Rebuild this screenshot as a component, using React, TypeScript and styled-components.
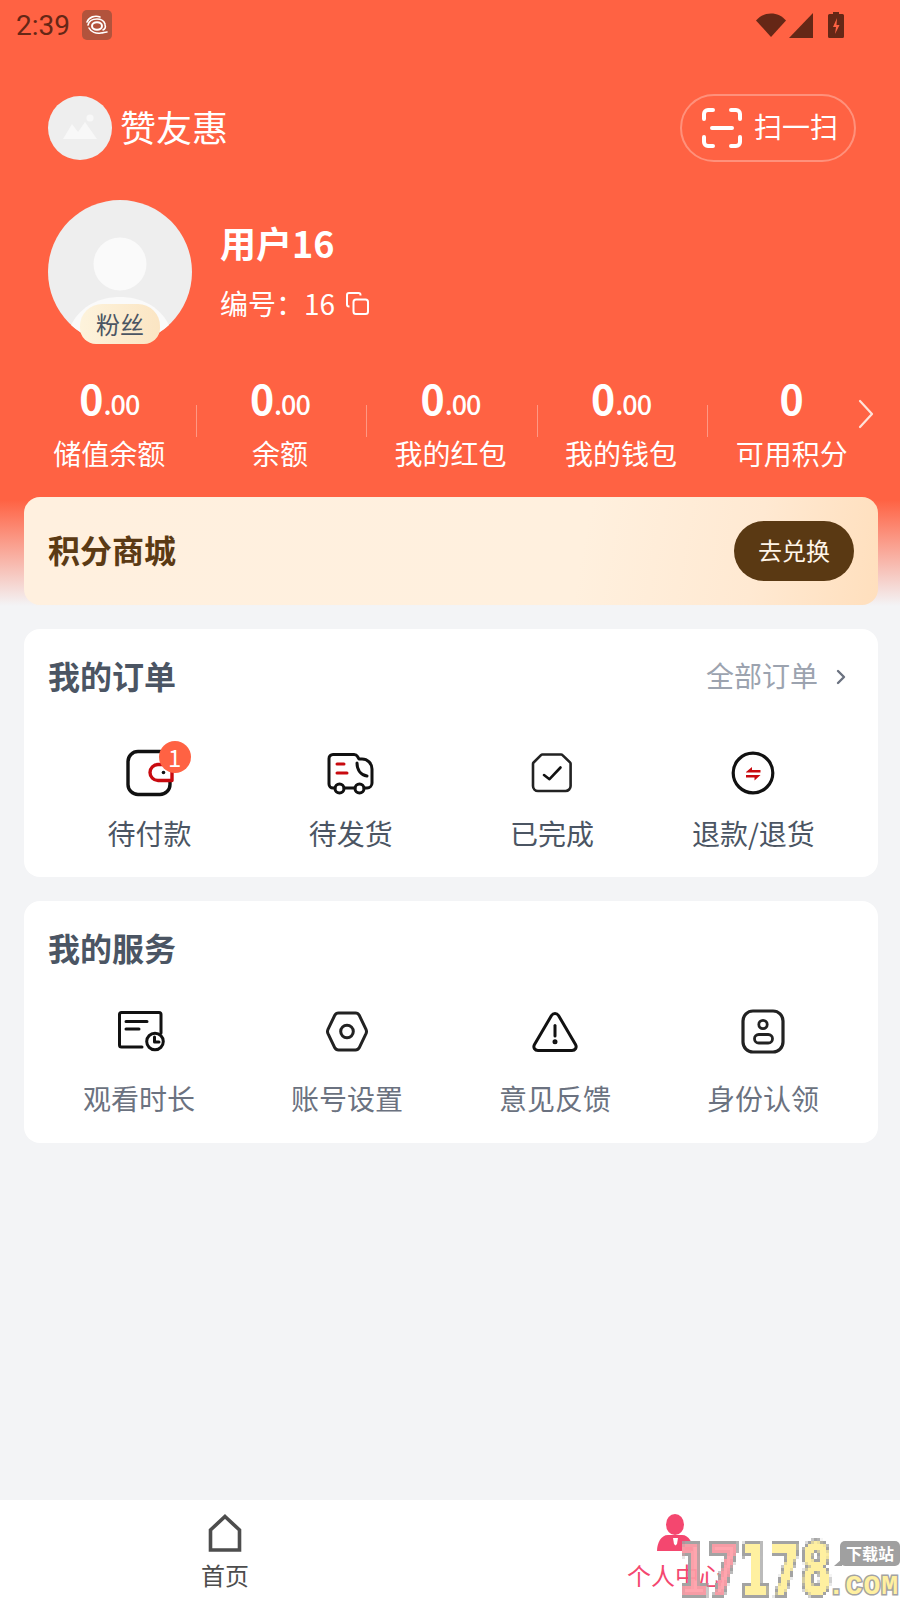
import styled, { createGlobalStyle } from 'styled-components';

const CJK = `"Noto Sans CJK SC", "Noto Sans", sans-serif`;

const GlobalStyle = createGlobalStyle`
  html, body {
    margin: 0;
    padding: 0;
    background: #f3f4f6;
    font-family: ${CJK};
  }
  * {
    box-sizing: border-box;
  }
`;

const stats = [
  { label: '储值余额', decimals: true },
  { label: '余额', decimals: true },
  { label: '我的红包', decimals: true },
  { label: '我的钱包', decimals: true },
  { label: '可用积分', decimals: false },
];

const WalletIcon = () => (
  <svg width="48" height="48" viewBox="0 0 48 48" fill="none">
    <rect x="2" y="2.500" width="42" height="43" rx="10" stroke="#111" strokeWidth="3.400" />
    <path d="M46 15.500H32a8 8 0 0 0 0 16h14z" fill="#fff" stroke="#c80a0f" strokeWidth="3.400" strokeLinejoin="round" />
    <circle cx="37.500" cy="23.500" r="1.800" fill="#111" />
  </svg>
);

const TruckIcon = () => (
  <svg width="48" height="48" viewBox="0 0 48 48" fill="none" stroke="#111" strokeWidth="3" strokeLinecap="round" strokeLinejoin="round">
    <path d="M8 39H6a4 4 0 0 1-4-4V9.500a4 4 0 0 1 4-4h21a4 4 0 0 1 3.500 2l1.500 2.500h3a10 10 0 0 1 10 10V34a5 5 0 0 1-5 5h-3" />
    <path d="M17 39h11" />
    <circle cx="12.500" cy="39.500" r="4.500" />
    <circle cx="32.500" cy="39.500" r="4.500" />
    <path d="M30 14c0 7 4 12 10 13" />
    <path d="M10 15h7M10 24h10" stroke="#c80a0f" />
  </svg>
);

const DoneIcon = () => (
  <svg width="48" height="48" viewBox="0 0 48 48" fill="none" stroke="#222" strokeWidth="2.600" strokeLinejoin="round" strokeLinecap="round">
    <path d="M14.500 5.500H33a2 2 0 0 1 1.500.6l7.500 7.300a2 2 0 0 1 .6 1.500V37a5 5 0 0 1-5 5H10a5 5 0 0 1-5-5V15a2 2 0 0 1 .6-1.500l7.400-7.400a2 2 0 0 1 1.500-.6z" />
    <path d="M16 26l5.500 4.200L32.500 18.500" stroke="#111" />
  </svg>
);

const RefundIcon = () => (
  <svg width="48" height="48" viewBox="0 0 48 48" fill="none">
    <circle cx="24" cy="24" r="19.800" stroke="#111" strokeWidth="3.200" />
    <path d="M17 23l6-5v3h8.500v2.500H17zM31.500 26l-6 5.500v-3H17V26z" fill="#c80a0f" />
  </svg>
);

const WatchIcon = () => (
  <svg width="48" height="48" viewBox="0 0 48 48" fill="none" stroke="#111" strokeWidth="3" strokeLinecap="round" strokeLinejoin="round" overflow="visible">
    <path d="M46 26V7.500a2 2 0 0 0-2-2H6.500a2 2 0 0 0-2 2V38a2 2 0 0 0 2 2H27" />
    <path d="M11 14.500h21M11 22h13" />
    <circle cx="40" cy="34.500" r="8.300" />
    <path d="M39.500 30v5h4.500" />
  </svg>
);

const SettingIcon = () => (
  <svg width="48" height="48" viewBox="0 0 48 48" fill="none" stroke="#222" strokeWidth="3" strokeLinejoin="round">
    <path d="M15.500 6H32.500Q35 6 36.200 8.200L43 22.300Q44 24.500 43 26.700L36.200 40.800Q35 43 32.500 43H15.500Q13 43 11.800 40.800L5 26.700Q4 24.500 5 22.300L11.800 8.200Q13 6 15.500 6z" />
    <circle cx="24" cy="24.500" r="6.300" />
  </svg>
);

const WarnIcon = () => (
  <svg width="48" height="48" viewBox="0 0 48 48" fill="none" stroke="#111" strokeWidth="3" strokeLinecap="round" strokeLinejoin="round">
    <path d="M24 6.500c-1.500 0-2.700.8-3.500 2L3.500 37.500c-1.700 3 .3 6 3.500 6h34c3.200 0 5.200-3 3.500-6L27.500 8.500c-.8-1.200-2-2-3.500-2z" />
    <path d="M24 18.500v10.500" />
    <circle cx="24" cy="34.800" r="1" fill="#111" />
  </svg>
);

const IdIcon = () => (
  <svg width="48" height="48" viewBox="0 0 48 48" fill="none" stroke="#222" strokeWidth="3.200">
    <rect x="4" y="4" width="40" height="41" rx="10" />
    <circle cx="24" cy="17.500" r="4.200" strokeWidth="2.800" />
    <rect x="15.500" y="27.500" width="18" height="8.500" rx="4.250" strokeWidth="2.800" />
  </svg>
);

const orders = [
  { label: '待付款', Icon: WalletIcon, badge: 1 },
  { label: '待发货', Icon: TruckIcon },
  { label: '已完成', Icon: DoneIcon },
  { label: '退款/退货', Icon: RefundIcon },
];

const services = [
  { label: '观看时长', Icon: WatchIcon },
  { label: '账号设置', Icon: SettingIcon },
  { label: '意见反馈', Icon: WarnIcon },
  { label: '身份认领', Icon: IdIcon },
];

const App = () => {
  return (
    <Page>
      <GlobalStyle />
      <StatusBar>
        <StatusLeft>
          <Time>2:39</Time>
          <AppNotice>
            <svg width="24" height="24" viewBox="0 0 24 24" fill="none" stroke="#fff" strokeLinecap="round">
              <path d="M2 9c2-5 8-7 13-5M3 12c1-4 5-6 9-6 4 0 7 2 8 5" strokeWidth="1.600" />
              <ellipse cx="12" cy="13" rx="5" ry="3.800" strokeWidth="2" />
              <path d="M4 15c2 4 7 6 12 5 2 0 4-1 6-1M20 12c1 2 0 4-2 5" strokeWidth="1.600" />
            </svg>
          </AppNotice>
        </StatusLeft>
        <StatusRight>
          <svg width="30" height="24" viewBox="0 0 30 24" fill="#652716">
            <path d="M0 7.500C4 3 9 .5 15 .5s11 2.500 15 7L15 24z" />
          </svg>
          <svg width="24" height="25" viewBox="0 0 24 25" fill="#652716">
            <path d="M24 0v25H0z" />
          </svg>
          <BatteryGap />
          <svg width="16" height="26" viewBox="0 0 16 26">
            <path d="M5 0h6v2h3.500a1.500 1.500 0 0 1 1.500 1.500V24.500a1.500 1.500 0 0 1-1.500 1.500h-13A1.500 1.500 0 0 1 0 24.500V3.500A1.500 1.500 0 0 1 1.500 2H5z" fill="#652716" />
            <path d="M9 6l-4 9h3l-1 7 4.500-9H8.500z" fill="#ff6243" />
          </svg>
        </StatusRight>
      </StatusBar>

      <Header>
        <Brand>
          <BrandLogo>
            <svg width="64" height="64" viewBox="0 0 64 64">
              <path d="M15 43l9-15 6 8 7-10 12 17z" fill="#f8f8f8" />
              <circle cx="42" cy="22" r="3.600" fill="#f8f8f8" />
            </svg>
          </BrandLogo>
          <BrandName>赞友惠</BrandName>
        </Brand>
        <ScanButton>
          <svg width="40" height="40" viewBox="0 0 40 40" fill="none" stroke="#fff" strokeWidth="4" strokeLinecap="round">
            <path d="M11 2H6a4 4 0 0 0-4 4v5M29 2h5a4 4 0 0 1 4 4v5M11 38H6a4 4 0 0 1-4-4v-5M29 38h5a4 4 0 0 0 4-4v-5M10 20h20" />
          </svg>
          <ScanText>扫一扫</ScanText>
        </ScanButton>
      </Header>

      <Profile>
        <Avatar>
          <svg width="144" height="144" viewBox="0 0 144 144">
            <circle cx="72" cy="72" r="72" fill="#eeeeee" />
            <circle cx="72" cy="64" r="26.500" fill="#fafafa" />
            <path d="M23 125c10-20 30-28 49-28s39 8 49 28a72 72 0 0 1-98 0z" fill="#fafafa" />
          </svg>
          <FanBadge>粉丝</FanBadge>
        </Avatar>
        <ProfileInfo>
          <UserName>用户16</UserName>
          <UserNo>
            编号：16
            <svg width="23" height="23" viewBox="0 0 23 23" fill="none" stroke="#fff" strokeWidth="2" strokeLinejoin="round">
              <rect x="7.500" y="7.500" width="14.500" height="14.500" rx="2.500" />
              <path d="M3.500 14.500H3a2 2 0 0 1-2-2V3a2 2 0 0 1 2-2h9.500a2 2 0 0 1 2 2v.5" />
            </svg>
          </UserNo>
        </ProfileInfo>
      </Profile>

      <StatsRow>
        {stats.map((item, index) => (
          <StatItem key={item.label} $divider={index > 0}>
            <StatValue>
              0{item.decimals && <StatDecimals>.00</StatDecimals>}
            </StatValue>
            <StatLabel>{item.label}</StatLabel>
          </StatItem>
        ))}
        <StatsArrow>
          <svg width="18" height="30" viewBox="0 0 18 30" fill="none" stroke="#ffe3da" strokeWidth="2.200" strokeLinecap="round" strokeLinejoin="round">
            <path d="M3 2l12 13L3 28" />
          </svg>
        </StatsArrow>
      </StatsRow>

      <Banner>
        <BannerTitle>积分商城</BannerTitle>
        <BannerButton>去兑换</BannerButton>
      </Banner>

      <OrderCard>
        <CardHead>
          <CardTitle>我的订单</CardTitle>
          <AllOrders>
            全部订单
            <svg width="12" height="16" viewBox="0 0 12 16" fill="none" stroke="#6b7280" strokeWidth="2.400" strokeLinecap="round" strokeLinejoin="round">
              <path d="M3 2l6 6-6 6" />
            </svg>
          </AllOrders>
        </CardHead>
        <OrderGrid>
          {orders.map(({ label, Icon, badge }) => (
            <OrderItem key={label}>
              <IconSlot>
                <Icon />
                {badge && <CountBadge>{badge}</CountBadge>}
              </IconSlot>
              <OrderLabel>{label}</OrderLabel>
            </OrderItem>
          ))}
        </OrderGrid>
      </OrderCard>

      <ServiceCard>
        <ServiceTitle>我的服务</ServiceTitle>
        <ServiceGrid>
          {services.map(({ label, Icon }) => (
            <ServiceItem key={label}>
              <IconSlot>
                <Icon />
              </IconSlot>
              <ServiceLabel>{label}</ServiceLabel>
            </ServiceItem>
          ))}
        </ServiceGrid>
      </ServiceCard>

      <TabBar>
        <TabItem>
          <svg width="36" height="38" viewBox="0 0 36 38" fill="none" stroke="#4d4d4d" strokeWidth="3.600" strokeLinejoin="miter">
            <path d="M18 2.500L32.500 16V36H3.500V16z" />
          </svg>
          <TabLabel>首页</TabLabel>
        </TabItem>
        <TabItem $active>
          <svg width="36" height="38" viewBox="0 0 36 38">
            <ellipse cx="18" cy="10.500" rx="9" ry="10.500" fill="#f4476f" />
            <path d="M0 37c0-8 4-16 11-16h14c7 0 11 8 11 16z" fill="#f4476f" />
            <path d="M16 24h5l-1 6-1.500 1.500L17 30z" fill="#fff" />
          </svg>
          <TabLabel>个人中心</TabLabel>
        </TabItem>
      </TabBar>

      <Watermark>
        <PixelFilter width="0" height="0">
          <filter id="pixelate" x="-5%" y="-5%" width="110%" height="110%">
            <feFlood x="1" y="1" width="1" height="1" />
            <feComposite width="3" height="3" />
            <feTile result="grid" />
            <feComposite in="SourceGraphic" in2="grid" operator="in" />
            <feMorphology operator="dilate" radius="1" />
          </filter>
        </PixelFilter>
        <WatermarkArt>
          <WatermarkDigits>
            <PinkDigits>17</PinkDigits>178
          </WatermarkDigits>
        </WatermarkArt>
        <WatermarkTag>下载站</WatermarkTag>
        <WatermarkDomain>.COM</WatermarkDomain>
      </Watermark>
    </Page>
  );
};

const Page = styled.div`
  position: relative;
  width: 900px;
  height: 1600px;
  overflow: hidden;
  display: flex;
  flex-direction: column;
  background: linear-gradient(to bottom, #ff6243 0, #ff6243 500px, #f3f4f6 606px, #f3f4f6 100%);
`;
const StatusBar = styled.div`
  height: 50px;
  padding: 0 56px 0 16px;
  display: flex;
  align-items: center;
  justify-content: space-between;
`;
const StatusLeft = styled.div`
  display: flex;
  align-items: center;
  gap: 12px;
`;
const Time = styled.span`
  font-family: Roboto, sans-serif;
  font-size: 28px;
  color: #652716;
`;
const AppNotice = styled.div`
  width: 30px;
  height: 30px;
  border-radius: 5px;
  background: #b2533c;
  display: flex;
  align-items: center;
  justify-content: center;
`;
const StatusRight = styled.div`
  display: flex;
  align-items: center;
  gap: 3px;
`;
const BatteryGap = styled.span`
  width: 9px;
`;
const Header = styled.div`
  margin-top: 44px;
  height: 68px;
  padding: 0 44px 0 48px;
  display: flex;
  align-items: center;
  justify-content: space-between;
`;
const Brand = styled.div`
  display: flex;
  align-items: center;
  gap: 8px;
`;
const BrandLogo = styled.div`
  width: 64px;
  height: 64px;
  border-radius: 50%;
  background: #eeeeee;
`;
const BrandName = styled.span`
  padding-bottom: 4px;
  font-size: 36px;
  color: #fff;
`;
const ScanButton = styled.div`
  width: 176px;
  height: 68px;
  border: 2px solid rgba(255, 255, 255, 0.3);
  border-radius: 34px;
  padding-left: 20px;
  display: flex;
  align-items: center;
  gap: 12px;
`;
const ScanText = styled.span`
  padding-bottom: 4px;
  font-size: 28px;
  color: #fff;
`;
const Profile = styled.div`
  margin-top: 38px;
  padding-left: 48px;
  display: flex;
  align-items: center;
  gap: 28px;
`;
const Avatar = styled.div`
  position: relative;
  width: 144px;
  height: 144px;
`;
const FanBadge = styled.span`
  position: absolute;
  left: 32px;
  bottom: 0;
  width: 80px;
  height: 40px;
  border-radius: 22px 22px 16px 16px;
  background: linear-gradient(to right, #fdf3dc, #fbe5c3);
  color: #4b5563;
  font-size: 24px;
  line-height: 40px;
  text-align: center;
`;
const ProfileInfo = styled.div`
  padding-bottom: 3px;
  display: flex;
  flex-direction: column;
  gap: 13px;
  color: #fff;
`;
const UserName = styled.div`
  font-size: 36px;
  font-weight: 700;
  line-height: 52px;
`;
const UserNo = styled.div`
  display: flex;
  align-items: center;
  gap: 11px;
  font-size: 28px;
  line-height: 44px;
`;
const StatsRow = styled.div`
  position: relative;
  margin-top: 31px;
  height: 100px;
  padding: 0 23px 0 24px;
  display: grid;
  grid-template-columns: repeat(5, 1fr);
`;
const StatItem = styled.div<{ $divider?: boolean }>`
  position: relative;
  display: flex;
  flex-direction: column;
  align-items: center;
  color: #fff;
  &::before {
    content: '';
    display: ${({ $divider }) => ($divider ? 'block' : 'none')};
    position: absolute;
    left: 1px;
    top: 30px;
    width: 1px;
    height: 32px;
    background: rgba(255, 255, 255, 0.35);
  }
`;
const StatValue = styled.div`
  height: 52px;
  font-size: 41px;
  font-weight: 700;
  line-height: 45px;
`;
const StatDecimals = styled.span`
  font-size: 27px;
  font-weight: 500;
  letter-spacing: -1px;
`;
const StatLabel = styled.div`
  font-size: 28px;
  line-height: 40px;
  margin-top: 6px;
`;
const StatsArrow = styled.div`
  position: absolute;
  right: 25px;
  top: 24px;
`;
const Banner = styled.div`
  margin: 22px 22px 0 24px;
  height: 108px;
  padding: 0 24px;
  border-radius: 16px;
  background: linear-gradient(100deg, #fff0df 0%, #fff0de 65%, #ffe9d2 85%, #ffdfbd 100%);
  display: flex;
  align-items: center;
  justify-content: space-between;
`;
const BannerTitle = styled.span`
  padding-bottom: 4px;
  font-size: 32px;
  font-weight: 700;
  color: #5b3a14;
`;
const BannerButton = styled.span`
  width: 120px;
  height: 60px;
  border-radius: 30px;
  background: #5a3913;
  color: #fff5e8;
  font-size: 24px;
  line-height: 58px;
  text-align: center;
`;
const Card = styled.div`
  margin: 24px 22px 0 24px;
  border-radius: 16px;
  background: #fff;
`;
const OrderCard = styled(Card)`
  height: 248px;
  padding: 22px 24px 0;
`;
const ServiceCard = styled(Card)`
  height: 242px;
  padding: 22px 11px 0;
`;
const CardHead = styled.div`
  display: flex;
  align-items: center;
  justify-content: space-between;
`;
const CardTitle = styled.div`
  font-size: 32px;
  font-weight: 700;
  line-height: 48px;
  color: #4b5563;
`;
const ServiceTitle = styled(CardTitle)`
  padding-left: 13px;
`;
const AllOrders = styled.div`
  display: flex;
  align-items: center;
  gap: 17px;
  padding-right: 7px;
  font-size: 28px;
  color: #9ca3af;
  svg {
    margin-top: 4px;
  }
`;
const OrderGrid = styled.div`
  margin-top: 50px;
  padding-left: 1px;
  display: grid;
  grid-template-columns: repeat(4, 1fr);
`;
const OrderItem = styled.div`
  display: flex;
  flex-direction: column;
  align-items: center;
`;
const IconSlot = styled.div`
  position: relative;
  width: 48px;
  height: 48px;
`;
const CountBadge = styled.span`
  position: absolute;
  left: 33px;
  top: -8px;
  width: 32px;
  height: 32px;
  border-radius: 50%;
  background: #ff6243;
  color: #fff;
  font-size: 24px;
  line-height: 32px;
  text-align: center;
`;
const OrderLabel = styled.span`
  margin-top: 15px;
  font-size: 28px;
  line-height: 42px;
  color: #4b5563;
`;
const ServiceGrid = styled.div`
  margin-top: 36px;
  display: grid;
  grid-template-columns: repeat(4, 1fr);
`;
const ServiceItem = styled.div`
  display: flex;
  flex-direction: column;
  align-items: center;
`;
const ServiceLabel = styled.span`
  margin-top: 22px;
  font-size: 28px;
  line-height: 42px;
  color: #6b7280;
`;
const TabBar = styled.div`
  margin-top: auto;
  height: 100px;
  background: #fff;
  display: grid;
  grid-template-columns: 1fr 1fr;
`;
const TabItem = styled.div<{ $active?: boolean }>`
  display: flex;
  flex-direction: column;
  align-items: center;
  padding-top: 14px;
  color: ${({ $active }) => ($active ? '#f4476f' : '#4d4d4d')};
`;
const TabLabel = styled.span`
  margin-top: 6px;
  font-size: 24px;
  line-height: 34px;
`;
const Watermark = styled.div`
  position: absolute;
  right: 0;
  bottom: 0;
  width: 224px;
  height: 62px;
  pointer-events: none;
`;
const PixelFilter = styled.svg`
  position: absolute;
`;
const WatermarkArt = styled.div`
  position: absolute;
  inset: 0;
  filter: url(#pixelate);
`;
const WatermarkDigits = styled.div`
  position: absolute;
  left: 2px;
  top: 4px;
  font-family: "DejaVu Sans", sans-serif;
  font-size: 70px;
  font-weight: 700;
  line-height: 56px;
  color: #fff0a0;
  -webkit-text-stroke: 6px #a3a3a3;
  paint-order: stroke fill;
  transform: scaleX(0.63);
  transform-origin: left top;
`;
const PinkDigits = styled.span`
  color: rgba(255, 155, 165, 0.9);
`;
const WatermarkTag = styled.span`
  position: absolute;
  right: 0;
  top: 3px;
  width: 60px;
  height: 25px;
  border-radius: 5px;
  background: #a0a0a0;
  color: #fff;
  font-size: 16px;
  font-weight: 700;
  line-height: 25px;
  text-align: center;
  &::after {
    content: '';
    position: absolute;
    left: -6px;
    bottom: 0;
    border-style: solid;
    border-width: 0 0 7px 8px;
    border-color: transparent transparent #a0a0a0 transparent;
  }
`;
const WatermarkDomain = styled.span`
  position: absolute;
  right: 1px;
  bottom: 2px;
  font-family: "Liberation Mono", monospace;
  font-size: 28px;
  font-weight: 700;
  line-height: 22px;
  letter-spacing: 1px;
  color: #fff0a0;
  -webkit-text-stroke: 3px #a3a3a3;
  paint-order: stroke fill;
`;
export default App;
